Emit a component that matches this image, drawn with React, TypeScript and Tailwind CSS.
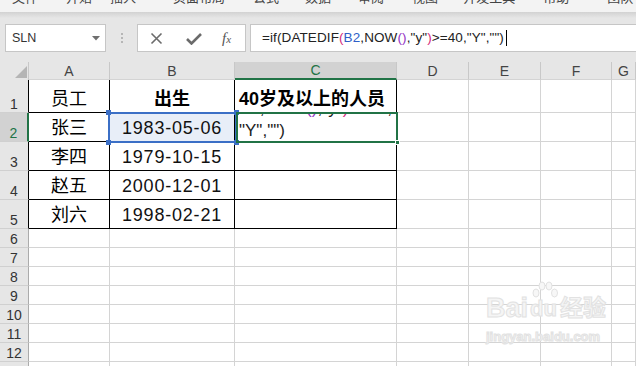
import React from "react"

const FONT = "font-['Liberation_Sans','Noto_Sans_CJK_SC',sans-serif]"

const tabs = [
  { label: "文件", ml: "ml-[12px]" },
  { label: "开始", ml: "ml-[28px]" },
  { label: "插入", ml: "ml-[18px]" },
  { label: "页面布局", ml: "ml-[37px]" },
  { label: "公式", ml: "ml-[28px]" },
  { label: "数据", ml: "ml-[26px]" },
  { label: "审阅", ml: "ml-[27px]" },
  { label: "视图", ml: "ml-[28px]" },
  { label: "开发工具", ml: "ml-[25px]" },
  { label: "帮助", ml: "ml-[28px]" },
  { label: "团队", ml: "ml-[38px]" },
]

const cols = [
  { key: "A", w: "w-[81px]" },
  { key: "B", w: "w-[125px]" },
  { key: "C", w: "w-[162px]" },
  { key: "D", w: "w-[72px]" },
  { key: "E", w: "w-[72px]" },
  { key: "F", w: "w-[71px]" },
  { key: "G", w: "flex-1" },
]

const people = [
  { name: "张三", born: "1983-05-06" },
  { name: "李四", born: "1979-10-15" },
  { name: "赵五", born: "2000-12-01" },
  { name: "刘六", born: "1998-02-21" },
]

function FormulaText() {
  return (
    <span className="whitespace-nowrap">
      =if(DATEDIF<span className="text-[#d4287c]">(</span>
      <span className="text-[#2f5fc8]">B2</span>,NOW
      <span className="text-[#9333c4]">()</span>,"y"
      <span className="text-[#d4287c]">)</span>&gt;=40,"Y","")
    </span>
  )
}

function ColumnHeaders() {
  return (
    <div className="flex h-[18px]">
      <div className="relative w-[29px] shrink-0 border-r border-[#c8c8c8] bg-[#e6e6e6]">
        <svg className="absolute left-[15px] top-[4px]" width="12" height="12" viewBox="0 0 12 12">
          <polygon points="12,0 12,12 0,12" fill="#b5b5b5" />
        </svg>
      </div>
      {cols.map((c) =>
        c.key === "C" ? (
          <div
            key={c.key}
            className={`${c.w} shrink-0 border-r border-b-2 border-r-[#c8c8c8] border-b-[#217346] bg-[#d2d2d2] flex items-end justify-center text-[14px] leading-[16px] text-[#217346]`}
          >
            {c.key}
          </div>
        ) : (
          <div
            key={c.key}
            className={`${c.w} ${c.key === "G" ? "" : "shrink-0"} border-r border-b border-r-[#c8c8c8] border-b-[#d4d4d4] bg-[#e6e6e6] flex items-end justify-center text-[14px] leading-[16px] text-[#444]`}
          >
            {c.key}
          </div>
        )
      )}
    </div>
  )
}

function RowHeader({ n, h, kind }: { n: number; h: string; kind: "data" | "active" | "plain" }) {
  const edge =
    kind === "active"
      ? "border-r-2 border-r-[#217346] bg-[#d2d2d2] text-[#217346]"
      : kind === "data"
      ? "border-r border-r-black bg-[#e6e6e6] text-[#333]"
      : "border-r border-r-[#ababab] bg-[#e6e6e6] text-[#333]"
  return (
    <div
      className={`w-[29px] ${h} shrink-0 border-b border-b-[#d0d0d0] ${edge} flex items-end justify-center text-[14px] leading-[16px]`}
    >
      {n}
    </div>
  )
}

function EmptyCells({ h }: { h: string }) {
  return (
    <>
      {cols.map((c) => (
        <div
          key={c.key}
          className={`${c.w} ${h} ${c.key === "G" ? "" : "shrink-0"} border-r border-b border-[#d4d4d4]`}
        />
      ))}
    </>
  )
}

export default function App() {
  return (
    <div className={`relative w-[636px] h-[366px] overflow-hidden bg-white ${FONT}`}>
      {/* ribbon tabs, mostly scrolled out of view */}
      <div className="flex h-[12px] overflow-hidden bg-[#f3f3f3] text-[13px] leading-[13px] text-[#444]">
        {tabs.map((t) => (
          <span key={t.label} className={`${t.ml} -mt-[9px] shrink-0 whitespace-nowrap`}>
            {t.label}
          </span>
        ))}
      </div>
      <div className="h-[6px] bg-gradient-to-b from-[#d2d2d2] to-[#e6e6e6]" />

      {/* name box + formula bar */}
      <div className="flex h-[44px] items-start bg-[#e6e6e6] pt-[6px]">
        <div className="ml-[5px] flex h-[28px] w-[101px] shrink-0 items-center justify-between border border-[#c6c6c6] bg-white pl-[6px] pr-[5px] text-[12.5px] text-[#333]">
          <span>SLN</span>
          <svg width="8" height="5" viewBox="0 0 8 5">
            <polygon points="0,0 8,0 4,4.5" fill="#6f6f6f" />
          </svg>
        </div>
        <div className="ml-[15px] mt-[9px] flex w-[2px] shrink-0 flex-col gap-[2px]">
          <div className="h-[2px] w-[2px] bg-[#b6b6b6]" />
          <div className="h-[2px] w-[2px] bg-[#b6b6b6]" />
          <div className="h-[2px] w-[2px] bg-[#b6b6b6]" />
        </div>
        <div className="ml-[14px] flex h-[28px] w-[109px] shrink-0 items-center border border-[#c6c6c6] bg-white">
          <svg className="ml-[12px]" width="13" height="13" viewBox="0 0 13 13">
            <path d="M1.5 1.5 L11.5 11.5 M11.5 1.5 L1.5 11.5" stroke="#6b6b6b" strokeWidth="1.6" fill="none" />
          </svg>
          <svg className="ml-[23px]" width="16" height="13" viewBox="0 0 16 13">
            <path d="M1 7 L5.5 11.5 L15 2" stroke="#6b6b6b" strokeWidth="2.6" fill="none" />
          </svg>
          <span className="ml-[20px] font-['Liberation_Serif',serif] text-[15px] italic leading-none text-[#555]">
            f<span className="text-[11px]">x</span>
          </span>
        </div>
        <div className="ml-[4px] -mr-[4px] flex h-[28px] flex-1 items-center border border-[#c6c6c6] bg-white pl-[11px] text-[13.5px] tracking-[0.1px] text-[#222]">
          <FormulaText />
          <span className="ml-[2px] h-[16px] w-[1px] bg-black" />
        </div>
      </div>

      {/* sheet */}
      <div className="relative">
        <ColumnHeaders />

        {/* row 1 */}
        <div className="flex">
          <RowHeader n={1} h="h-[33px]" kind="data" />
          <div className="flex h-[33px] w-[81px] shrink-0 items-end justify-center border-r border-b border-black pb-[2px] text-[18px] leading-[22px] text-black">
            员工
          </div>
          <div className="flex h-[33px] w-[125px] shrink-0 items-end justify-center border-r border-b border-black pb-[2px] text-[18px] font-bold leading-[22px] text-black">
            出生
          </div>
          <div className="flex h-[33px] w-[162px] shrink-0 items-end border-r border-b border-black pb-[2px] pl-[4px] text-[18px] font-bold leading-[22px] whitespace-nowrap text-black">
            40岁及以上的人员
          </div>
          <div className="flex flex-1">
            {cols.slice(3).map((c) => (
              <div key={c.key} className={`${c.w} h-[33px] ${c.key === "G" ? "" : "shrink-0"} border-r border-b border-[#d4d4d4]`} />
            ))}
          </div>
        </div>

        {/* rows 2-5 */}
        {people.map((p, i) => (
          <div key={p.name} className="flex">
            <RowHeader n={i + 2} h="h-[29px]" kind={i === 0 ? "active" : "data"} />
            <div className="flex h-[29px] w-[81px] shrink-0 items-end justify-center border-r border-b border-black pb-[2px] text-[18px] leading-[22px] text-black">
              {p.name}
            </div>
            <div
              className={`flex h-[29px] w-[125px] shrink-0 items-end justify-center border-r border-b border-black pb-[2px] text-[18px] leading-[22px] tracking-[0.8px] text-[#111] ${
                i === 0 ? "bg-[#e8eef8]" : ""
              }`}
            >
              {p.born}
            </div>
            <div className="flex h-[29px] w-[162px] shrink-0 flex-col justify-end overflow-hidden border-r border-b border-black pl-[4px] text-[17px] leading-[20px] whitespace-nowrap text-[#222]">
              {i === 0 && (
                <>
                  <span className="mb-[2px] shrink-0">
                    <span className="text-[#2f5fc8]">B2</span>,NOW<span className="text-[#9333c4]">()</span>,"y"
                    <span className="text-[#d4287c]">)</span>&gt;=40,
                  </span>
                  <span className="shrink-0">"Y","")</span>
                </>
              )}
            </div>
            <div className="flex flex-1">
              {cols.slice(3).map((c) => (
                <div key={c.key} className={`${c.w} h-[29px] ${c.key === "G" ? "" : "shrink-0"} border-r border-b border-[#d4d4d4]`} />
              ))}
            </div>
          </div>
        ))}

        {/* empty rows */}
        {[6, 7, 8, 9, 10, 11, 12, 13].map((n) => (
          <div key={n} className="flex">
            <RowHeader n={n} h="h-[19px]" kind="plain" />
            <EmptyCells h="h-[19px]" />
          </div>
        ))}

        {/* selection: B2 */}
        <div className="absolute left-[108px] top-[50px] h-[31px] w-[129px] border-2 border-[#3b6fc6]">
          <div className="absolute -left-[4px] -top-[4px] h-[5px] w-[5px] bg-[#3b6fc6]" />
          <div className="absolute -right-[4px] -top-[4px] h-[5px] w-[5px] bg-[#3b6fc6]" />
          <div className="absolute -left-[4px] -bottom-[4px] h-[5px] w-[5px] bg-[#3b6fc6]" />
          <div className="absolute -right-[4px] -bottom-[4px] h-[5px] w-[5px] bg-[#3b6fc6]" />
        </div>
        {/* active cell: C2 */}
        <div className="absolute left-[236px] top-[50px] h-[31px] w-[162px] border-2 border-[#217346]">
          <div className="absolute -right-[4px] -bottom-[4px] h-[5px] w-[5px] border border-white bg-[#217346]" />
        </div>

        {/* watermark */}
        <div className="pointer-events-none absolute left-[486px] top-[232px] flex flex-col items-start text-[#f5f5f5] [-webkit-text-stroke:1px_#e2e2e2]">
          <div className="flex items-end">
            <span className="text-[27px] font-bold leading-[28px]">Bai</span>
            <span className="relative ml-[2px] text-[22px] font-bold leading-[26px]">
              <svg className="absolute -top-[15px] left-[2px]" width="26" height="18" viewBox="0 0 26 18">
                <g fill="#f7f7f7" stroke="#e2e2e2" strokeWidth="1">
                  <ellipse cx="4" cy="12" rx="3" ry="4" />
                  <ellipse cx="10" cy="5" rx="3" ry="4" />
                  <ellipse cx="17" cy="5" rx="3" ry="4" />
                  <ellipse cx="22.5" cy="12" rx="3" ry="4" />
                </g>
              </svg>
              du
            </span>
            <span className="ml-[3px] text-[23px] font-bold leading-[28px]">经验</span>
          </div>
          <span className="mt-[8px] text-[13px] font-bold leading-[14px]">jingyan.baidu.com</span>
        </div>
      </div>
    </div>
  )
}
